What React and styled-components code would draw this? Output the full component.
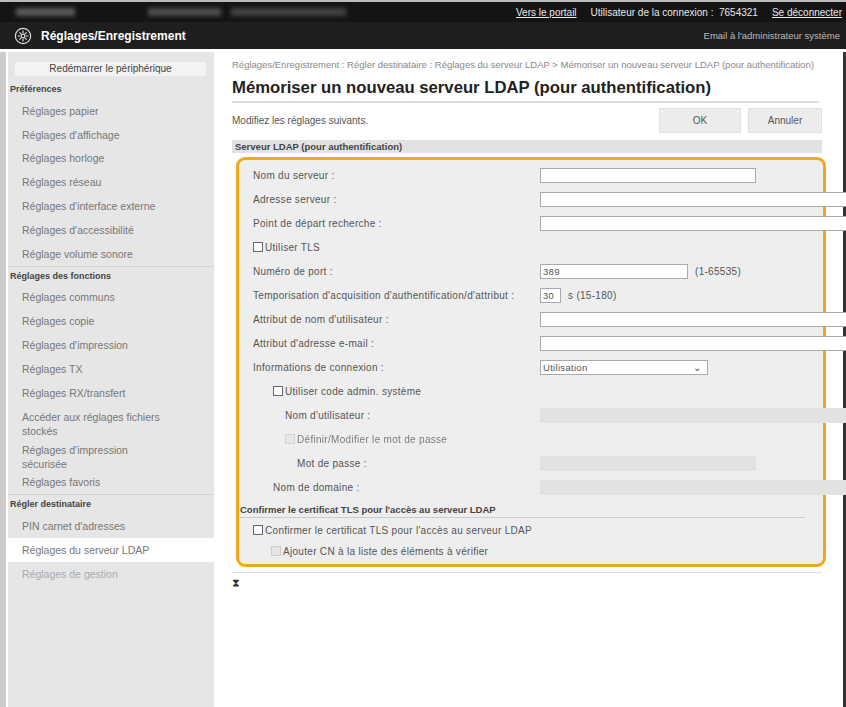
import React from 'react';
import styled, { createGlobalStyle } from 'styled-components';

const Global = createGlobalStyle`
  html, body { margin: 0; padding: 0; overflow: hidden; background: #fff; }
  body { font-family: 'Liberation Sans', Arial, sans-serif; color: #333; }
`;

const Page = styled.div`
  width: 846px;
  height: 707px;
  overflow: hidden;
  display: flex;
  flex-direction: column;
`;

const TopBar = styled.div`
  height: 20px;
  background: #141414;
  display: flex;
  align-items: center;
  justify-content: flex-end;
  gap: 14px;
  padding: 0 4px 0 0;
  font-size: 10px;
  color: #e8e8e8;
  border-top: 2px solid #bbb;
`;

const Blur = styled.div`
  margin-right: auto;
  margin-left: 16px;
  width: 330px;
  height: 8px;
  background: linear-gradient(90deg, #777 0 18%, transparent 18% 40%, #666 40% 62%, transparent 62% 65%, #555 65% 100%);
  filter: blur(2px);
  opacity: 0.7;
`;

const TopLink = styled.span`
  text-decoration: ${p => (p.$underline ? 'underline' : 'none')};
`;

const TitleBar = styled.div`
  height: 27px;
  background: #1e1e1e;
  display: flex;
  align-items: center;
  padding: 0 6px 0 14px;
  gap: 9px;
  border-bottom: 3px solid #fff;
`;

const AppName = styled.span`
  color: #fff;
  font-weight: bold;
  font-size: 12px;
  flex: 1;
`;

const MailLink = styled.span`
  color: #bbb;
  font-size: 9.5px;
`;

const Body = styled.div`
  flex: 1;
  display: flex;
  border-left: 6px solid #ccc;
  padding-left: 2px;
`;

const Sidebar = styled.div`
  width: 206px;
  flex: none;
  background: #e6e6e6;
  padding-top: 10px;
  display: flex;
  flex-direction: column;
  font-size: 10.5px;
  color: #777;
`;

const RestartBtn = styled.div`
  margin: 0 8px 4px 7px;
  height: 14px;
  background: #f3f3f3;
  text-align: center;
  line-height: 14px;
  color: #444;
  font-size: 10px;
`;

const GroupHead = styled.div`
  font-weight: bold;
  color: #444;
  font-size: 9px;
  padding: 4px 2px 5px;
  border-top: ${p => (p.$line ? '1px solid #d2d2d2' : 'none')};
`;

const NavItem = styled.div`
  min-height: ${p => (p.$tall ? '38px' : '23.8px')};
  display: flex;
  align-items: center;
  padding: 0 40px 0 14px;
  line-height: 14px;
  background: ${p => (p.$active ? '#fff' : 'transparent')};
  color: ${p => (p.$faded ? '#aaa' : '#777')};
`;

const Main = styled.div`
  flex: 1;
  padding: 8px 0 0 18px;
  display: flex;
  flex-direction: column;
  border-right: 3px solid #333;
`;

const Crumb = styled.div`
  font-size: 9.5px;
  color: #888;
  line-height: 10px;
  padding-right: 24px;
`;

const Title = styled.h1`
  margin: 8px 24px 0 0;
  font-size: 16.7px;
  font-weight: bold;
  color: #222;
  padding-bottom: 3px;
  border-bottom: 2px solid #ddd;
`;

const ActionRow = styled.div`
  display: flex;
  align-items: center;
  gap: 7px;
  margin: 5px 21px 0 0;
  font-size: 10px;
  color: #555;
`;

const Hint = styled.span`
  flex: 1;
`;

const Btn = styled.div`
  width: ${p => p.$w}px;
  height: 23px;
  background: #ececec;
  border: 1px solid #e0e0e0;
  display: flex;
  align-items: center;
  justify-content: center;
  font-size: 10px;
  color: #555;
`;

const SectionBar = styled.div`
  margin: 7px 21px 0 0;
  height: 13px;
  background: #e2e2e2;
  font-size: 9.5px;
  font-weight: bold;
  color: #444;
  padding-left: 3px;
  line-height: 13px;
`;

const Box = styled.div`
  margin: 4px 0 0 4px;
  border: 3px solid #f2a81d;
  border-radius: 9px;
  background: #eeeeee;
  padding: 3px 0 4px 14px;
  display: flex;
  flex-direction: column;
  width: 590px;
  box-sizing: border-box;
`;

const Row = styled.div`
  height: 24px;
  display: flex;
  align-items: center;
  font-size: 10px;
  letter-spacing: 0.3px;
  color: #555;
  padding-left: ${p => p.$indent || 0}px;
  opacity: ${p => (p.$dim ? 0.75 : 1)};
`;

const Label = styled.span`
  width: ${p => 287 - (p.$indent || 0)}px;
  flex: none;
  white-space: nowrap;
`;

const Input = styled.div`
  width: ${p => (p.$w ? `${p.$w}px` : '320px')};
  height: 15px;
  flex: none;
  background: ${p => (p.$disabled ? '#e2e2e2' : '#fff')};
  border: 1px solid ${p => (p.$disabled ? '#e2e2e2' : '#aaa')};
  font-size: 9.5px;
  line-height: 14px;
  padding-left: 2px;
  box-sizing: border-box;
  margin-right: ${p => (p.$w ? '0' : '-60px')};
`;

const Select = styled.div`
  width: 168px;
  height: 15px;
  background: #fff;
  border: 1px solid #aaa;
  box-sizing: border-box;
  display: flex;
  align-items: center;
  justify-content: space-between;
  padding: 0 6px 0 2px;
  font-size: 9.5px;
`;

const Check = styled.span`
  width: 10px;
  height: 10px;
  border: 1px solid ${p => (p.$disabled ? '#ccc' : '#666')};
  background: ${p => (p.$disabled ? '#e6e6e6' : '#fff')};
  margin-right: 2px;
  box-sizing: border-box;
  display: inline-block;
`;

const Suffix = styled.span`
  margin-left: 7px;
`;

const SubHead = styled.div`
  margin: 0 18px 0 -13px;
  font-size: 9.5px;
  font-weight: bold;
  color: #444;
  padding: 5px 0 2px;
  border-bottom: 1px solid #ccc;
`;

const Footer = styled.div`
  margin: 5px 21px 0 0;
  border-top: 1px solid #ddd;
  padding-top: 3px;
  font-size: 11px;
  color: #333;
`;

const Gear = () => (
  <svg width="18" height="18" viewBox="0 0 20 20" fill="none" stroke="#ddd" strokeWidth="1.3">
    <circle cx="10" cy="10" r="8.5" />
    <path d="M10 4v3M10 13v3M4 10h3M13 10h3M6 6l2 2M12 12l2 2M14 6l-2 2M8 12l-2 2" />
    <circle cx="10" cy="10" r="2" />
  </svg>
);

const nav = [
  { head: 'Préférences' },
  'Réglages papier', "Réglages d'affichage", 'Réglages horloge', 'Réglages réseau',
  "Réglages d'interface externe", "Réglages d'accessibilité", 'Réglage volume sonore',
  { head: 'Réglages des fonctions', line: true },
  'Réglages communs', 'Réglages copie', "Réglages d'impression", 'Réglages TX', 'Réglages RX/transfert',
  { tall: true, label: 'Accéder aux réglages fichiers stockés' },
  "Réglages d'impression sécurisée", 'Réglages favoris',
  { head: 'Régler destinataire', line: true },
  "PIN carnet d'adresses",
  { active: true, label: 'Réglages du serveur LDAP' },
  { faded: true, label: 'Réglages de gestion' },
];

export default function App() {
  return (
    <Page>
      <Global />
      <TopBar>
        <Blur />
        <TopLink $underline>Vers le portail</TopLink>
        <span>Utilisateur de la connexion : &nbsp;7654321</span>
        <TopLink $underline>Se déconnecter</TopLink>
      </TopBar>
      <TitleBar>
        <Gear />
        <AppName>Réglages/Enregistrement</AppName>
        <MailLink>Email à l'administrateur système</MailLink>
      </TitleBar>
      <Body>
        <Sidebar>
          <RestartBtn>Redémarrer le périphérique</RestartBtn>
          {nav.map((n, i) =>
            typeof n === 'string' ? (
              <NavItem key={i}>{n}</NavItem>
            ) : n.head ? (
              <GroupHead key={i} $line={n.line}>{n.head}</GroupHead>
            ) : (
              <NavItem key={i} $tall={n.tall} $active={n.active} $faded={n.faded}>{n.label}</NavItem>
            )
          )}
        </Sidebar>
        <Main>
          <Crumb>
            Réglages/Enregistrement : Régler destinataire : Réglages du serveur LDAP &gt; Mémoriser un nouveau serveur LDAP (pour authentification)
          </Crumb>
          <Title>Mémoriser un nouveau serveur LDAP (pour authentification)</Title>
          <ActionRow>
            <Hint>Modifiez les réglages suivants.</Hint>
            <Btn $w={80}>OK</Btn>
            <Btn $w={72}>Annuler</Btn>
          </ActionRow>
          <SectionBar>Serveur LDAP (pour authentification)</SectionBar>
          <Box>
            <Row><Label>Nom du serveur :</Label><Input $w={216} /></Row>
            <Row><Label>Adresse serveur :</Label><Input /></Row>
            <Row><Label>Point de départ recherche :</Label><Input /></Row>
            <Row><Check />Utiliser TLS</Row>
            <Row><Label>Numéro de port :</Label><Input $w={148}>389</Input><Suffix>(1-65535)</Suffix></Row>
            <Row><Label>Temporisation d'acquisition d'authentification/d'attribut :</Label><Input $w={21}>30</Input><Suffix>s (15-180)</Suffix></Row>
            <Row><Label>Attribut de nom d'utilisateur :</Label><Input /></Row>
            <Row><Label>Attribut d'adresse e-mail :</Label><Input /></Row>
            <Row><Label>Informations de connexion :</Label><Select>Utilisation<span>⌄</span></Select></Row>
            <Row $indent={20}><Check />Utiliser code admin. système</Row>
            <Row $indent={32}><Label $indent={32}>Nom d'utilisateur :</Label><Input $disabled /></Row>
            <Row $indent={32} $dim><Check $disabled />Définir/Modifier le mot de passe</Row>
            <Row $indent={44}><Label $indent={44}>Mot de passe :</Label><Input $w={216} $disabled /></Row>
            <Row $indent={20}><Label $indent={20}>Nom de domaine :</Label><Input $disabled /></Row>
            <SubHead>Confirmer le certificat TLS pour l'accès au serveur LDAP</SubHead>
            <Row><Check />Confirmer le certificat TLS pour l'accès au serveur LDAP</Row>
            <Row $indent={18} style={{ height: 18 }}><Check $disabled />Ajouter CN à la liste des éléments à vérifier</Row>
          </Box>
          <Footer>⧗</Footer>
        </Main>
      </Body>
    </Page>
  );
}
